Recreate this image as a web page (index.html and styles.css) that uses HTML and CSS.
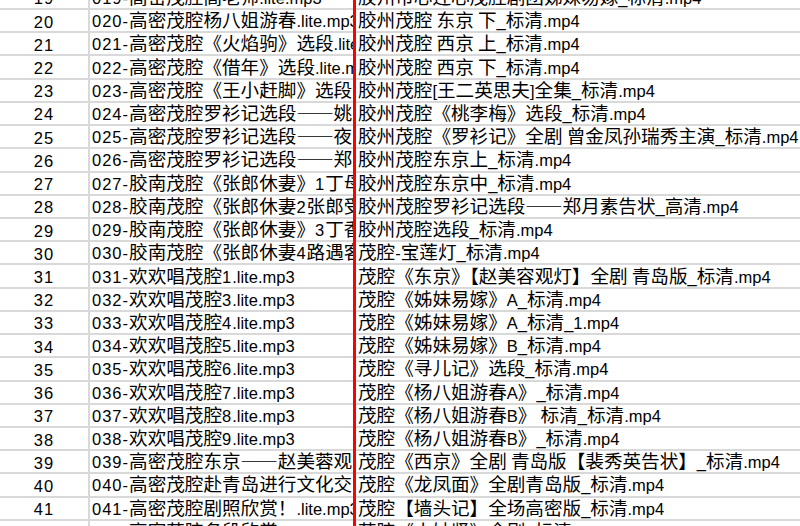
FILE: index.html
```html
<!DOCTYPE html>
<html lang="zh-CN">
<head>
<meta charset="utf-8">
<title>茂腔文件列表</title>
<link rel="stylesheet" href="styles.css">
</head>
<body>
<div class="sheet">
  <div class="row"><div class="num">19</div><div class="a"><span class="d">019-</span><span class="c">高密茂腔高老师</span>.lite.mp3</div><div class="b"><span class="c">胶州市心连心茂腔剧团姊妹易嫁</span>_<span class="c">标清</span>.mp4</div></div>
  <div class="row"><div class="num">20</div><div class="a"><span class="d">020-</span><span class="c">高密茂腔杨八姐游春</span>.lite.mp3</div><div class="b"><span class="c">胶州茂腔 东京 下</span>_<span class="c">标清</span>.mp4</div></div>
  <div class="row"><div class="num">21</div><div class="a"><span class="d">021-</span><span class="c">高密茂腔《火焰驹》选段</span>.lite.mp3</div><div class="b"><span class="c">胶州茂腔 西京 上</span>_<span class="c">标清</span>.mp4</div></div>
  <div class="row"><div class="num">22</div><div class="a"><span class="d">022-</span><span class="c">高密茂腔《借年》选段</span>.lite.mp3</div><div class="b"><span class="c">胶州茂腔 西京 下</span>_<span class="c">标清</span>.mp4</div></div>
  <div class="row"><div class="num">23</div><div class="a"><span class="d">023-</span><span class="c">高密茂腔《王小赶脚》选段</span>.lite.mp3</div><div class="b"><span class="c">胶州茂腔</span>[<span class="c">王二英思夫</span>]<span class="c">全集</span>_<span class="c">标清</span>.mp4</div></div>
  <div class="row"><div class="num">24</div><div class="a"><span class="d">024-</span><span class="c">高密茂腔罗衫记选段——姚月英</span>.lite.mp3</div><div class="b"><span class="c">胶州茂腔《桃李梅》选段</span>_<span class="c">标清</span>.mp4</div></div>
  <div class="row"><div class="num">25</div><div class="a"><span class="d">025-</span><span class="c">高密茂腔罗衫记选段——夜审</span>.lite.mp3</div><div class="b"><span class="c">胶州茂腔《罗衫记》全剧 曾金凤孙瑞秀主演</span>_<span class="c">标清</span>.mp4</div></div>
  <div class="row"><div class="num">26</div><div class="a"><span class="d">026-</span><span class="c">高密茂腔罗衫记选段——郑月素</span>.lite.mp3</div><div class="b"><span class="c">胶州茂腔东京上</span>_<span class="c">标清</span>.mp4</div></div>
  <div class="row"><div class="num">27</div><div class="a"><span class="d">027-</span><span class="c">胶南茂腔《张郎休妻》</span><span class="d">1</span><span class="c">丁母训子</span>.lite.mp3</div><div class="b"><span class="c">胶州茂腔东京中</span>_<span class="c">标清</span>.mp4</div></div>
  <div class="row"><div class="num">28</div><div class="a"><span class="d">028-</span><span class="c">胶南茂腔《张郎休妻</span><span class="d">2</span><span class="c">张郎受骗》</span>.lite.mp3</div><div class="b"><span class="c">胶州茂腔罗衫记选段——郑月素告状</span>_<span class="c">高清</span>.mp4</div></div>
  <div class="row"><div class="num">29</div><div class="a"><span class="d">029-</span><span class="c">胶南茂腔《张郎休妻》</span><span class="d">3</span><span class="c">丁香送别</span>.lite.mp3</div><div class="b"><span class="c">胶州茂腔选段</span>_<span class="c">标清</span>.mp4</div></div>
  <div class="row"><div class="num">30</div><div class="a"><span class="d">030-</span><span class="c">胶南茂腔《张郎休妻</span><span class="d">4</span><span class="c">路遇客商》</span>.lite.mp3</div><div class="b"><span class="c">茂腔</span>-<span class="c">宝莲灯</span>_<span class="c">标清</span>.mp4</div></div>
  <div class="row"><div class="num">31</div><div class="a"><span class="d">031-</span><span class="c">欢欢唱茂腔</span><span class="d">1</span>.lite.mp3</div><div class="b"><span class="c">茂腔《东京》【赵美容观灯】全剧 青岛版</span>_<span class="c">标清</span>.mp4</div></div>
  <div class="row"><div class="num">32</div><div class="a"><span class="d">032-</span><span class="c">欢欢唱茂腔</span><span class="d">3</span>.lite.mp3</div><div class="b"><span class="c">茂腔《姊妹易嫁》</span>A_<span class="c">标清</span>.mp4</div></div>
  <div class="row"><div class="num">33</div><div class="a"><span class="d">033-</span><span class="c">欢欢唱茂腔</span><span class="d">4</span>.lite.mp3</div><div class="b"><span class="c">茂腔《姊妹易嫁》</span>A_<span class="c">标清</span>_1.mp4</div></div>
  <div class="row"><div class="num">34</div><div class="a"><span class="d">034-</span><span class="c">欢欢唱茂腔</span><span class="d">5</span>.lite.mp3</div><div class="b"><span class="c">茂腔《姊妹易嫁》</span>B_<span class="c">标清</span>.mp4</div></div>
  <div class="row"><div class="num">35</div><div class="a"><span class="d">035-</span><span class="c">欢欢唱茂腔</span><span class="d">6</span>.lite.mp3</div><div class="b"><span class="c">茂腔《寻儿记》选段</span>_<span class="c">标清</span>.mp4</div></div>
  <div class="row"><div class="num">36</div><div class="a"><span class="d">036-</span><span class="c">欢欢唱茂腔</span><span class="d">7</span>.lite.mp3</div><div class="b"><span class="c">茂腔《杨八姐游春</span>A<span class="c">》</span>_<span class="c">标清</span>.mp4</div></div>
  <div class="row"><div class="num">37</div><div class="a"><span class="d">037-</span><span class="c">欢欢唱茂腔</span><span class="d">8</span>.lite.mp3</div><div class="b"><span class="c">茂腔《杨八姐游春</span>B<span class="c">》 标清</span>_<span class="c">标清</span>.mp4</div></div>
  <div class="row"><div class="num">38</div><div class="a"><span class="d">038-</span><span class="c">欢欢唱茂腔</span><span class="d">9</span>.lite.mp3</div><div class="b"><span class="c">茂腔《杨八姐游春</span>B<span class="c">》</span>_<span class="c">标清</span>.mp4</div></div>
  <div class="row"><div class="num">39</div><div class="a"><span class="d">039-</span><span class="c">高密茂腔东京——赵美蓉观灯</span>.lite.mp3</div><div class="b"><span class="c">茂腔《西京》全剧 青岛版【裴秀英告状】</span>_<span class="c">标清</span>.mp4</div></div>
  <div class="row"><div class="num">40</div><div class="a"><span class="d">040-</span><span class="c">高密茂腔赴青岛进行文化交流</span>.lite.mp3</div><div class="b"><span class="c">茂腔《龙凤面》全剧青岛版</span>_<span class="c">标清</span>.mp4</div></div>
  <div class="row"><div class="num">41</div><div class="a"><span class="d">041-</span><span class="c">高密茂腔剧照欣赏！</span>.lite.mp3</div><div class="b"><span class="c">茂腔【墙头记】全场高密版</span>_<span class="c">标清</span>.mp4</div></div>
  <div class="row"><div class="num">42</div><div class="a"><span class="d">042-</span><span class="c">高密茂腔名段欣赏</span>.lite.mp3</div><div class="b"><span class="c">茂腔《小姑贤》全剧</span>_<span class="c">标清</span>.mp4</div></div>
  <div class="redline"></div>
</div>
</body>
</html>
```
FILE: styles.css
```css
html, body {
  margin: 0;
  padding: 0;
  background: #fff;
  overflow: hidden;
}

.sheet {
  position: relative;
  margin-top: -13.23px;
  font-family: "Liberation Sans", "Noto Sans CJK SC", sans-serif;
  font-size: 16.5px;
  color: #000;
}

.row {
  display: grid;
  grid-template-columns: 90px 266px 1fr;
  height: 23.23px;
  box-sizing: border-box;
  border-bottom: 2px solid #d9d9d9;
}

.num,
.a,
.b {
  white-space: nowrap;
  line-height: 16px;
}

.num {
  box-sizing: border-box;
  border-right: 2px solid #d9d9d9;
  text-align: center;
  padding-top: 3.6px;
  letter-spacing: 1px;
  overflow: hidden;
}

.a {
  padding: 1.1px 0 0 2px;
  overflow: hidden;
}

.b {
  padding: 1.1px 0 0 2px;
}

.d {
  letter-spacing: 1px;
}

.c {
  font-family: "Noto Sans CJK SC", sans-serif;
  font-size: 18.6px;
  line-height: 16px;
}

.redline {
  position: absolute;
  left: 353px;
  top: 0;
  bottom: 0;
  width: 3px;
  background: #ff0000;
}
```
